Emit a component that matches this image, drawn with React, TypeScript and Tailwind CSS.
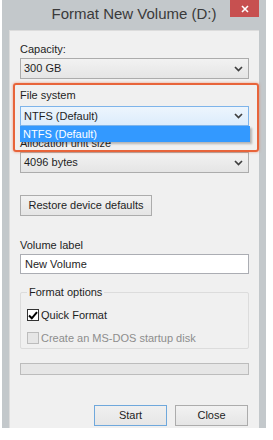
import type { ReactNode } from 'react'

const font = { fontFamily: '"Liberation Sans", Arial, sans-serif' }

function Chevron() {
  return (
    <svg width="9" height="6" viewBox="0 0 9 6" className="shrink-0">
      <path d="M1 1 L4.5 4.5 L8 1" fill="none" stroke="#3f3f3f" strokeWidth="1.7" />
    </svg>
  )
}

function Combo({ value, focused }: { value: string; focused?: boolean }) {
  return (
    <div
      className={
        focused
          ? 'flex h-[20px] items-center justify-between border border-[#7eb4ea] bg-gradient-to-b from-[#edf5fd] to-[#dcecfc] pl-[3px] pr-[5px] text-[11px] text-[#1e1e1e]'
          : 'flex h-[21px] items-center justify-between border border-[#acacac] bg-gradient-to-b from-[#f2f2f2] to-[#e5e5e5] pl-[3px] pr-[5px] text-[11px] text-[#1e1e1e]'
      }
    >
      <span>{value}</span>
      <Chevron />
    </div>
  )
}

function Label({ children, className = '' }: { children: ReactNode; className?: string }) {
  return <div className={`text-[11px] leading-[14px] text-[#1e1e1e] ${className}`}>{children}</div>
}

export default function App() {
  return (
    <div className="relative h-[440px] w-[273px] overflow-hidden bg-white" style={font}>
      <div className="ml-[2px] flex h-[428px] w-[264px] flex-col bg-[#c3c8cb] px-[7px]">
        {/* Title bar */}
        <div className="relative flex h-[30px] shrink-0 items-center justify-center">
          <span className="pb-[1px] text-[15px] text-[#3a3a3a]">Format New Volume (D:)</span>
          <div className="absolute right-[0px] top-0 flex h-[17px] w-[29px] items-center justify-center bg-[#c75050]">
            <svg width="8" height="8" viewBox="0 0 8 8">
              <path d="M1 1 L7 7 M7 1 L1 7" stroke="#fff" strokeWidth="1.6" />
            </svg>
          </div>
        </div>

        {/* Client area */}
        <div className="relative flex flex-1 flex-col border-l border-t border-[#dcdcdc] bg-[#f0f0f0] px-[10px]">
          <Label className="mt-[11px]">Capacity:</Label>
          <div className="mt-[2px]">
            <Combo value="300 GB" />
          </div>

          <Label className="mt-[9px]">File system</Label>
          <div className="relative z-20 mt-[4px]">
            <Combo value="NTFS (Default)" focused />
            <div className="absolute left-0 right-[-1px] top-[20px] flex h-[16px] items-center bg-[#3399ff] pl-[3px] text-[11px] text-white shadow-[2px_2px_2px_rgba(0,0,0,0.25)]">
              NTFS (Default)
            </div>
          </div>

          <Label className="mt-[10px]">Allocation unit size</Label>
          <div className="mt-[2px]">
            <Combo value="4096 bytes" />
          </div>

          <div className="mt-[22px] flex h-[21px] w-[132px] items-center justify-center border border-[#acacac] bg-gradient-to-b from-[#f2f2f2] to-[#e5e5e5] text-[11px] text-[#1e1e1e]">
            Restore device defaults
          </div>

          <Label className="mt-[22px]">Volume label</Label>
          <div className="mt-[2px] flex h-[20px] items-center border border-[#abadb3] bg-white pl-[4px] text-[11px] text-[#1e1e1e]">
            New Volume
          </div>

          {/* Format options group */}
          <div className="relative mt-[18px] h-[57px] rounded-[2px] border border-[#dcdcdc]">
            <span className="absolute left-[6px] top-[-8px] bg-[#f0f0f0] px-[2px] text-[11px] leading-[14px] text-[#1e1e1e]">
              Format options
            </span>
            <div className="ml-[6px] mt-[14px] flex items-center gap-[2px] text-[11px] text-[#1e1e1e]">
              <div className="flex h-[12px] w-[12px] items-center justify-center border border-[#333] bg-white">
                <svg width="10" height="9" viewBox="0 0 10 9">
                  <path d="M1 4.5 L3.8 7.3 L9 1.2" fill="none" stroke="#000" strokeWidth="2" />
                </svg>
              </div>
              <span>Quick Format</span>
            </div>
            <div className="ml-[6px] mt-[6px] flex items-center gap-[2px] text-[11px] text-[#8d8d8d]">
              <div className="h-[12px] w-[12px] border border-[#bcbcbc] bg-[#e6e6e6]" />
              <span>Create an MS-DOS startup disk</span>
            </div>
          </div>

          <div className="mt-[14px] h-[12px] border border-[#bcbcbc] bg-[#e6e6e6]" />

          <div className="mt-[30px] flex justify-end gap-[8px] pr-[1px]">
            <div className="flex h-[21px] w-[73px] items-center justify-center border border-[#6fa8dc] bg-gradient-to-b from-[#f0f0f0] to-[#e6e6e6] text-[11px] text-[#1e1e1e]">
              Start
            </div>
            <div className="flex h-[21px] w-[73px] items-center justify-center border border-[#acacac] bg-gradient-to-b from-[#f2f2f2] to-[#e5e5e5] text-[11px] text-[#1e1e1e]">
              Close
            </div>
          </div>

          {/* Highlight box around File system */}
          <div className="pointer-events-none absolute left-[3px] right-[0px] top-[52px] z-30 h-[69px] rounded-[3px] border-2 border-[#e8643a] shadow-[0_0_3px_rgba(232,100,58,0.6)]" />
        </div>
      </div>
    </div>
  )
}
